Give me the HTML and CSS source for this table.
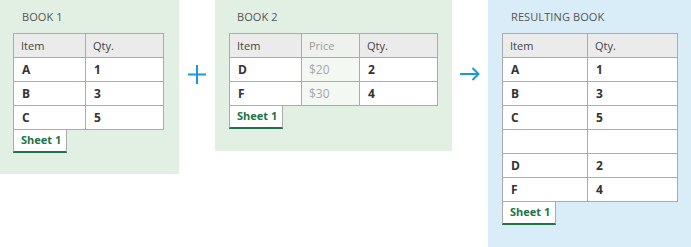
FILE: index.html
```html
<!DOCTYPE html>
<html>
<head>
<meta charset="utf-8">
<link rel="stylesheet" href="styles.css">
</head>
<body>
<div class="row">
  <section class="book book-one">
    <div class="title">BOOK 1</div>
    <div class="grid cols-2a">
      <div class="cell head">Item</div><div class="cell head">Qty.</div>
      <div class="cell">A</div><div class="cell">1</div>
      <div class="cell">B</div><div class="cell">3</div>
      <div class="cell">C</div><div class="cell">5</div>
    </div>
    <div class="tab">Sheet 1</div>
  </section>

  <div class="sep">
    <svg width="18" height="19" viewBox="0 0 18 19"><path d="M0 9.5H18M9 0V19" stroke="#1a9ad6" stroke-width="2" fill="none"/></svg>
  </div>

  <section class="book book-two">
    <div class="title">BOOK 2</div>
    <div class="grid cols-3">
      <div class="cell head">Item</div><div class="cell head dim-head">Price</div><div class="cell head">Qty.</div>
      <div class="cell">D</div><div class="cell dim">$20</div><div class="cell">2</div>
      <div class="cell">F</div><div class="cell dim">$30</div><div class="cell">4</div>
    </div>
    <div class="tab">Sheet 1</div>
  </section>

  <div class="sep">
    <svg width="20" height="14" viewBox="0 0 20 14"><path d="M0 7H18.5M12.5 1L18.5 7L12.5 13" stroke="#1a9ad6" stroke-width="2" fill="none"/></svg>
  </div>

  <section class="book book-three">
    <div class="title">RESULTING BOOK</div>
    <div class="grid cols-2b">
      <div class="cell head">Item</div><div class="cell head">Qty.</div>
      <div class="cell">A</div><div class="cell">1</div>
      <div class="cell">B</div><div class="cell">3</div>
      <div class="cell">C</div><div class="cell">5</div>
      <div class="cell"></div><div class="cell"></div>
      <div class="cell">D</div><div class="cell">2</div>
      <div class="cell">F</div><div class="cell">4</div>
    </div>
    <div class="tab">Sheet 1</div>
  </section>
</div>
</body>
</html>
```

FILE: styles.css
```css
* { box-sizing: border-box; }
html, body { margin: 0; padding: 0; background: #ffffff; }
body {
  width: 691px;
  height: 247px;
  overflow: hidden;
  font-family: "Open Sans", "Noto Sans", sans-serif;
  color: #333;
}
.row {
  display: flex;
  align-items: flex-start;
}
.book {
  padding: 0 0 0 13px;
}
.book-one {
  width: 179px;
  height: 174px;
  background: #e2f0e3;
}
.book-two {
  width: 237px;
  height: 151px;
  padding-left: 14px;
  background: #e2f0e3;
}
.book-three {
  width: 203px;
  height: 247px;
  padding-left: 14px;
  background: #d9edf8;
}
.title {
  height: 33px;
  padding: 9px 0 0 9px;
  font-size: 11px;
  line-height: 15px;
  color: #555;
  letter-spacing: 0.1px;
}
.book-two .title { padding-left: 8px; }
.grid {
  display: grid;
  gap: 1px;
  background: #ababab;
  border: 1px solid #ababab;
  width: max-content;
  grid-auto-rows: 23px;
}
.cols-2a { grid-template-columns: 71px 77px; }
.cols-3 { grid-template-columns: 71px 57px 77px; }
.cols-2b { grid-template-columns: 84px 89px; }
.cell {
  background: #ffffff;
  padding: 0 0 0 8px;
  font-size: 12px;
  font-weight: 700;
  line-height: 23px;
  color: #333;
}
.cell.head {
  background: #ebebeb;
  padding-left: 7px;
  font-size: 11px;
  font-weight: 400;
  color: #444;
}
.cell.dim-head {
  background: #eef1ee;
  color: #9a9a9a;
}
.cell.dim {
  background: #f3f8f3;
  padding-left: 7px;
  color: #a8a8a8;
  font-weight: 400;
}
.tab {
  width: 54px;
  height: 23px;
  background: #ffffff;
  border-left: 1px solid #ababab;
  border-right: 1px solid #ababab;
  border-bottom: 2px solid #217346;
  font-size: 11px;
  font-weight: 700;
  line-height: 20px;
  color: #217346;
  padding-left: 7px;
}
.sep {
  width: 36px;
  display: flex;
  justify-content: center;
  padding-top: 65px;
}
.sep:last-of-type { padding-top: 67px; }
```
